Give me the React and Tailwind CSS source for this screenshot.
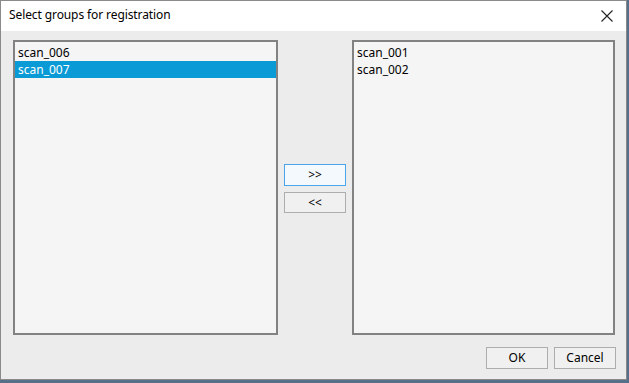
export default function App() {
  const font = { fontFamily: '"Noto Sans", "Open Sans", sans-serif' };
  return (
    <div className="w-[629px] h-[383px] bg-[#56708a] overflow-hidden" style={font}>
      <div className="w-[627px] h-[380px] border border-[#8a8a8a] bg-[#ececec] flex flex-col">
        <div className="h-[30px] bg-white flex items-center justify-between pl-[8px] pr-[10px] shrink-0">
          <span className="text-[12px] text-black leading-none pb-[2px] tracking-[-0.1px]">Select groups for registration</span>
          <svg width="12" height="12" viewBox="0 0 12 12" className="mr-[3px] mb-[1px]">
            <path d="M0.5 0.5 L11.5 11.5 M11.5 0.5 L0.5 11.5" stroke="#222" strokeWidth="1.1" fill="none" />
          </svg>
        </div>
        <div className="flex-1 flex flex-col pl-[12px] pr-[10px] pt-[9px] pb-[10px]">
          <div className="flex h-[295px]">
            <div className="w-[265px] h-full border-2 border-[#828282] bg-[#f5f5f5] pt-[2px] text-[12px] text-black">
              <div className="h-[17px] leading-[17px] pl-[3px]">scan_006</div>
              <div className="h-[17px] leading-[17px] pl-[3px] bg-[#0a9ad6] text-white">scan_007</div>
            </div>
            <div className="w-[74px] flex flex-col items-center pt-[124px] gap-[6px]">
              <button className="w-[62px] h-[22px] border border-[#4aa6e8] bg-[#f4f9fd] text-[12px] text-black leading-none flex items-center justify-center">&gt;&gt;</button>
              <button className="w-[62px] h-[21px] border border-[#adadad] bg-[#f0f0f0] text-[12px] text-black leading-none flex items-center justify-center">&lt;&lt;</button>
            </div>
            <div className="w-[263px] h-full border-2 border-[#828282] bg-[#f5f5f5] pt-[2px] text-[12px] text-black">
              <div className="h-[17px] leading-[17px] pl-[3px]">scan_001</div>
              <div className="h-[17px] leading-[17px] pl-[3px]">scan_002</div>
            </div>
          </div>
          <div className="flex justify-end gap-[6px] mt-[12px]">
            <button className="w-[62px] h-[22px] border border-[#adadad] bg-[#f0f0f0] text-[12px] text-black leading-none flex items-center justify-center">OK</button>
            <button className="w-[62px] h-[22px] border border-[#adadad] bg-[#f0f0f0] text-[12px] text-black leading-none flex items-center justify-center">Cancel</button>
          </div>
        </div>
      </div>
    </div>
  );
}
